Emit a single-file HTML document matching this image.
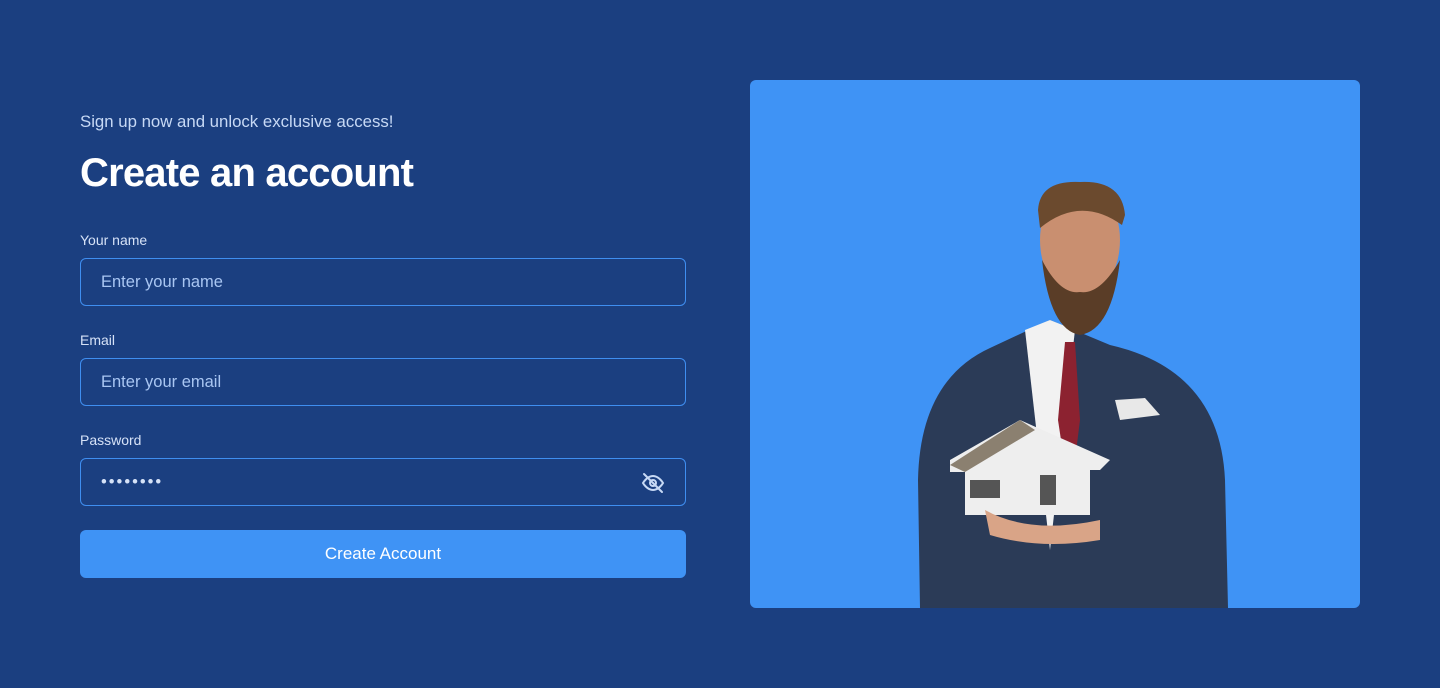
<!DOCTYPE html>
<html><head><style>
body{margin:0;width:1440px;height:688px;background:#1b3f80;font-family:"Liberation Sans",sans-serif;position:relative;overflow:hidden}
.sub{position:absolute;left:80px;top:112px;font-size:16.8px;color:#c7d9f5}
h1{position:absolute;left:80px;top:151px;margin:0;font-size:40px;font-weight:bold;color:#fff;letter-spacing:-0.8px}
.lbl{position:absolute;left:80px;font-size:14px;color:#d6e2f7}
.inp{position:absolute;left:80px;border:1px solid #3f8ef0;border-radius:6px;box-sizing:border-box;width:606px;height:48px;color:#a9c6f2;font-size:16.5px;line-height:46px;padding-left:20px}
.btn{position:absolute;left:80px;top:530px;width:606px;height:48px;background:#3f93f5;border-radius:6px;color:#fff;font-size:17px;text-align:center;line-height:48px}
.panel{position:absolute;left:750px;top:80px;width:610px;height:528px;background:#3f93f5;border-radius:6px;overflow:hidden}
</style></head><body>
<div class="sub">Sign up now and unlock exclusive access!</div>
<h1>Create an account</h1>
<div class="lbl" style="top:232px">Your name</div>
<div class="inp" style="top:258px">Enter your name</div>
<div class="lbl" style="top:332px">Email</div>
<div class="inp" style="top:358px">Enter your email</div>
<div class="lbl" style="top:432px">Password</div>
<div class="inp" style="top:458px;letter-spacing:2px;color:#d6e2f7">••••••••
<svg style="position:absolute;right:20px;top:12px" width="24" height="24" viewBox="0 0 24 24" fill="none" stroke="#c7d9f5" stroke-width="2" stroke-linecap="round"><path d="M2 12s4-7 10-7 10 7 10 7-4 7-10 7S2 12 2 12z"/><circle cx="12" cy="12" r="3"/><path d="M3 3l18 18"/></svg></div>
<div class="btn">Create Account</div>
<div class="panel">
<svg width="610" height="528" viewBox="0 0 610 528">
<path d="M170 528 L168 400 Q170 300 240 268 L300 240 L360 265 Q470 290 475 400 L478 528 Z" fill="#2b3b57"/>
<path d="M300 240 L275 250 L300 470 L325 250 Z" fill="#f2f2f2"/>
<path d="M315 262 L325 262 L330 340 L320 420 L308 340 Z" fill="#8c2230"/>
<ellipse cx="330" cy="160" rx="40" ry="58" fill="#c98f70"/>
<path d="M288 130 Q290 100 330 102 Q372 100 375 135 L372 145 Q330 115 290 148 Z" fill="#6b4a2e"/>
<path d="M292 180 Q300 250 330 255 Q362 250 370 180 Q350 215 330 212 Q310 215 292 180 Z" fill="#5a3d27"/>
<path d="M365 320 L395 318 L410 335 L370 340 Z" fill="#e8e8e8"/>
<path d="M200 380 L270 340 L360 380 L350 390 L340 390 L340 435 L215 435 L215 392 L200 392 Z" fill="#eeeeee"/>
<path d="M200 385 L270 340 L285 350 L215 392 Z" fill="#8b8070"/>
<rect x="220" y="400" width="30" height="18" fill="#555"/>
<rect x="290" y="395" width="16" height="30" fill="#555"/>
<path d="M235 430 Q280 455 350 440 L350 460 Q290 470 240 455 Z" fill="#d9a487"/>
</svg>
</div>
</body></html>
